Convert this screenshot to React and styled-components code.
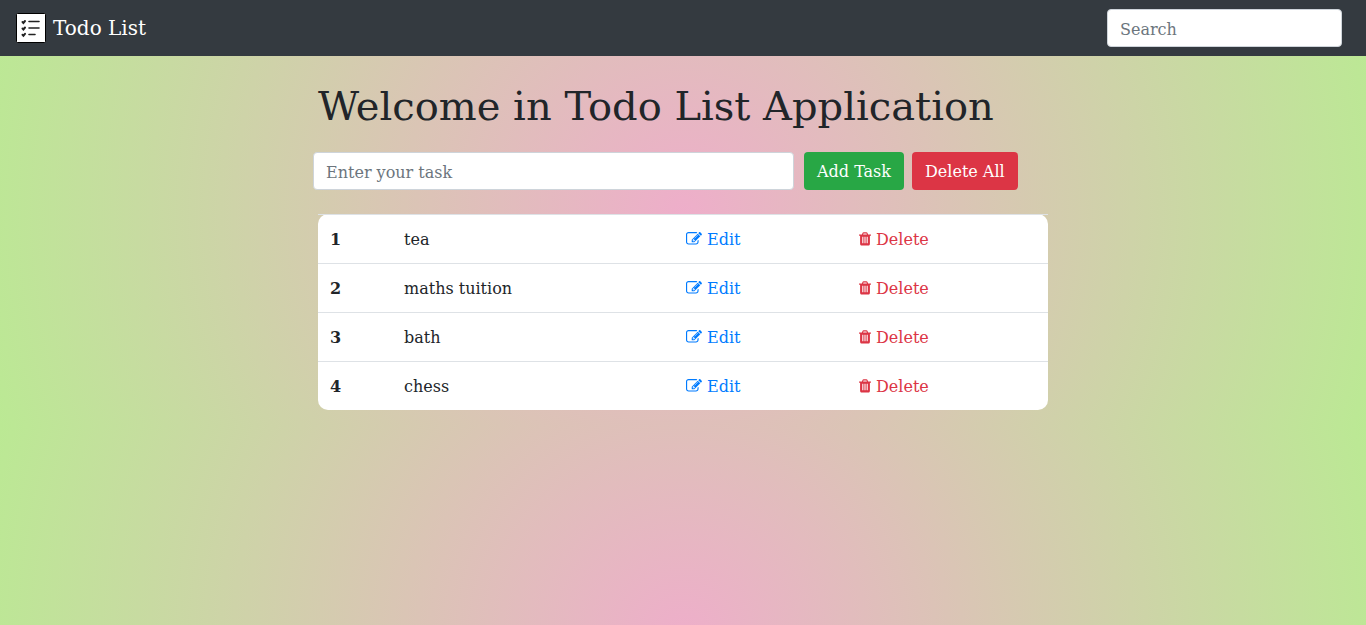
import React, { useState } from "react";
import styled, { createGlobalStyle } from "styled-components";

const GlobalStyle = createGlobalStyle`
  *, *::before, *::after { box-sizing: border-box; }
  body {
    margin: 0;
    font-family: "DejaVu Serif", serif;
    font-size: 16px;
    line-height: 24px;
    color: #212529;
    background: radial-gradient(circle, #eeaeca 0%, #bbe994 100%);
  }
`;

const Page = styled.div`
  padding-bottom: 16px;
`;

const Navbar = styled.nav`
  display: flex;
  align-items: center;
  justify-content: space-between;
  padding: 8px 24px 8px 16px;
  height: 56px;
  background: #343a40;
`;

const Brand = styled.a`
  display: flex;
  align-items: center;
  gap: 7px;
  font-size: 20px;
  line-height: 30px;
  color: #fff;
  text-decoration: none;
`;

const TextInput = styled.input`
  height: 38px;
  width: ${(p) => p.$width};
  padding: 7px 12px 5px;
  border: 1px solid #ced4da;
  border-radius: 4px;
  background: #fff;
  font: inherit;
  color: #495057;
  &::placeholder { color: #6c757d; opacity: 1; }
`;

const Main = styled.main`
  width: 730px;
  max-width: 100%;
  margin: 0 auto;
`;

const Title = styled.h1`
  margin: 0;
  padding: 24px 0 20px;
  font-size: 40px;
  line-height: 52px;
  font-weight: 400;
`;

const TaskForm = styled.form`
  display: flex;
  gap: 8px;
  margin: 0 0 24px -5px;
`;

const Field = styled.div`
  width: 481px;
  margin-right: 2px;
`;

const Button = styled.button`
  height: 38px;
  padding: 1px 12px 0;
  border: 1px solid transparent;
  border-radius: 4px;
  background: ${(p) => p.$color};
  color: #fff;
  font: inherit;
  white-space: nowrap;
  cursor: pointer;
`;

const TaskTable = styled.table`
  width: 100%;
  table-layout: fixed;
  border-collapse: separate;
  border-spacing: 0;
  border-radius: 10px;
  background: #fff;
`;

const Cell = styled.td`
  padding: 13px 12px 11px;
  border-top: 1px solid #dee2e6;
  text-align: left;
`;

const Col = styled.col`
  width: ${(p) => p.$width};
`;

const ActionLink = styled.a`
  display: inline-flex;
  align-items: center;
  gap: 5px;
  vertical-align: top;
  color: ${(p) => p.$color};
  text-decoration: none;
`;

function LogoIcon() {
  return (
    <svg width="30" height="30" viewBox="0 0 30 30" aria-hidden="true">
      <rect x="0.5" y="0.5" width="29" height="29" rx="1" fill="#fff" stroke="#000" />
      <g fill="none" stroke="#222" strokeLinecap="round">
        <path strokeWidth="1.6" d="M13 8.500h10M13 15h10M13 21.500h6" />
        <path strokeWidth="2" d="M6.500 9l.9.9L9 8M6.500 15.500l.9.9L9 14.500M6.500 21.800l.9.9L9 20.800" />
      </g>
    </svg>
  );
}

function EditIcon() {
  return (
    <svg width="16" height="16" viewBox="0 128 1792 1792" fill="currentColor" aria-hidden="true">
      <path d="M888 1184l116-116-152-152-116 116v56h96v96h56zm440-720q-16-16-33 1l-350 350q-17 17-1 33t33-1l350-350q17-17 1-33zm80 594v190q0 119-84.500 203.500t-203.500 84.500h-832q-119 0-203.500-84.500t-84.500-203.500v-832q0-119 84.500-203.500t203.500-84.500h832q63 0 117 25 15 7 18 23 3 17-9 29l-49 49q-14 14-32 8-23-6-45-6h-832q-66 0-113 47t-47 113v832q0 66 47 113t113 47h832q66 0 113-47t47-113v-126q0-13 9-22l64-64q15-15 35-7t20 29zm-96-738l288 288-672 672h-288v-288zm444 132l-92 92-288-288 92-92q28-28 68-28t68 28l152 152q28 28 28 68t-28 68z" />
    </svg>
  );
}

function TrashIcon() {
  return (
    <svg width="12" height="16" viewBox="192 128 1408 1792" fill="currentColor" aria-hidden="true">
      <path d="M704 1376v-704q0-14-9-23t-23-9h-64q-14 0-23 9t-9 23v704q0 14 9 23t23 9h64q14 0 23-9t9-23zm256 0v-704q0-14-9-23t-23-9h-64q-14 0-23 9t-9 23v704q0 14 9 23t23 9h64q14 0 23-9t9-23zm256 0v-704q0-14-9-23t-23-9h-64q-14 0-23 9t-9 23v704q0 14 9 23t23 9h64q14 0 23-9t9-23zm-544-992h448l-48-117q-7-9-17-11h-317q-10 2-17 11zm928 32v64q0 14-9 23t-23 9h-96v948q0 83-47 143.500t-113 60.500h-832q-66 0-113-58.500t-47-141.500v-952h-96q-14 0-23-9t-9-23v-64q0-14 9-23t23-9h309l70-167q15-37 54-63t79-26h320q40 0 79 26t54 63l70 167h309q14 0 23 9t9 23z" />
    </svg>
  );
}

const initialTasks = ["tea", "maths tuition", "bath", "chess"];

export default function App() {
  const [tasks, setTasks] = useState(initialTasks);
  const [draft, setDraft] = useState("");

  const addTask = (event) => {
    event.preventDefault();
    if (draft.trim()) {
      setTasks([...tasks, draft.trim()]);
      setDraft("");
    }
  };

  const removeTask = (index) => (event) => {
    event.preventDefault();
    setTasks(tasks.filter((_, i) => i !== index));
  };

  return (
    <>
      <GlobalStyle />
      <Page>
        <Navbar>
          <Brand href="#">
            <LogoIcon />
            Todo List
          </Brand>
          <TextInput $width="235px" type="search" placeholder="Search" aria-label="Search" />
        </Navbar>
        <Main>
          <Title>Welcome in Todo List Application</Title>
          <TaskForm onSubmit={addTask}>
            <Field>
              <TextInput
                $width="100%"
                type="text"
                placeholder="Enter your task"
                aria-label="Enter your task"
                value={draft}
                onChange={(e) => setDraft(e.target.value)}
              />
            </Field>
            <Button type="submit" $color="#28a745">Add Task</Button>
            <Button type="button" $color="#dc3545" onClick={() => setTasks([])}>Delete All</Button>
          </TaskForm>
          <TaskTable>
            <colgroup>
              <Col $width="74px" />
              <Col />
              <Col $width="173px" />
              <Col $width="201px" />
            </colgroup>
            <tbody>
              {tasks.map((task, i) => (
                <tr key={i}>
                  <Cell as="th" scope="row">{i + 1}</Cell>
                  <Cell>{task}</Cell>
                  <Cell>
                    <ActionLink href="#" $color="#007bff"><EditIcon />Edit</ActionLink>
                  </Cell>
                  <Cell>
                    <ActionLink href="#" $color="#dc3545" onClick={removeTask(i)}><TrashIcon />Delete</ActionLink>
                  </Cell>
                </tr>
              ))}
            </tbody>
          </TaskTable>
        </Main>
      </Page>
    </>
  );
}
